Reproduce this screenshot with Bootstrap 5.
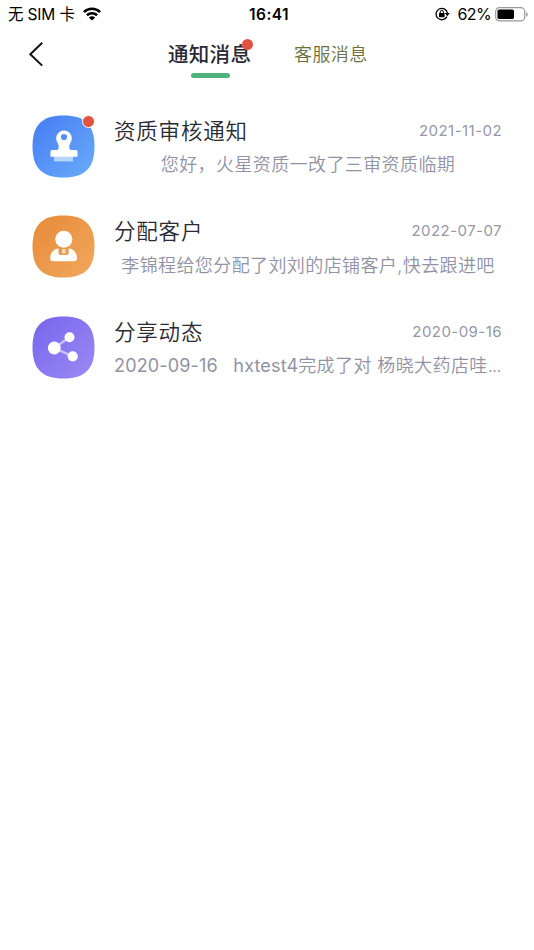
<!DOCTYPE html>
<html lang="zh-CN">
<head>
<meta charset="utf-8">
<meta name="viewport" content="width=device-width, initial-scale=1">
<title>通知消息</title>
<link href="https://cdn.jsdelivr.net/npm/bootstrap@5.3.0/dist/css/bootstrap.min.css" rel="stylesheet">
<style>
body{font-family:Inter,"Noto Sans CJK SC",sans-serif;color:#292a33;min-height:950px;overflow:hidden}
svg{display:block;flex:none}
.status-bar{height:28px;color:#000;font-size:15.5px;line-height:28px;padding:0 6px 0 8px}
.status-side{flex:1 1 0}
.clock{font-weight:600;font-size:15.5px;letter-spacing:.4px;padding:1px 0 0 2px}
.carrier{letter-spacing:-.15px;font-weight:400;padding-top:1px}
.pct{font-size:16px;letter-spacing:-.65px;margin-left:8px}
.top-nav{height:60px;padding-left:28px}
.back-btn{padding:13px 0 0;width:140px}
.tab-main{font-size:20.5px;font-weight:500;line-height:30px;letter-spacing:.3px;padding-top:12px;width:84px}
.tab-main::after{content:"";display:block;width:39px;height:5px;border-radius:3px;background:#4eb27c;margin:2.5px auto 0}
.tab-dot{width:11px;height:11px;background:#e15241;top:11px;right:-.5px}
.tab-side{font-size:18px;font-weight:350;line-height:30px;letter-spacing:.4px;color:#6c7040;padding-top:12px;margin-left:42px}
.messages{padding:26.5px 32px 0}
.message{height:100.6px;gap:19px}
.item-dot{width:13px;height:13px;background:#e15241;border:1px solid #fff;top:0;right:.5px}
.title{font-size:21.5px;line-height:32px;letter-spacing:.8px;font-weight:350}
.date{font-size:15px;letter-spacing:.45px;color:#9797a8;line-height:32px}
.desc{font-size:18px;font-weight:350;letter-spacing:.4px;line-height:28px;color:#9292a5;white-space:pre;margin-top:4.5px}
.latin{letter-spacing:.15px;font-weight:400}
.dots{letter-spacing:-.7px}
.message-body{min-width:0}
</style>
</head>
<body class="bg-white">
<header>
  <div class="status-bar d-flex align-items-center">
    <div class="status-side d-flex align-items-center">
      <span class="carrier">无 SIM 卡</span>
      <svg class="ms-2" width="18" height="14" viewBox="0 0 18 14"><g fill="none" stroke="#000" stroke-width="2.6"><path d="M.9 5.1C5.4.7 12.6.7 17.1 5.1"/><path d="M3.9 8.3c2.9-2.8 7.3-2.8 10.2 0"/></g><path d="M9 13.4 5.8 10.4c1.8-1.7 4.6-1.7 6.4 0z"/></svg>
    </div>
    <div class="clock">16:41</div>
    <div class="status-side d-flex align-items-center justify-content-end">
      <svg width="15" height="14" viewBox="0 0 15 14"><path d="M11.9 9.6A5.7 5.7 0 1 1 12.4 6M10.2 11.4l-.7.6" fill="none" stroke="#000" stroke-width="1.3"/><path d="M9.8 6h5l-2.5 3.3z"/><rect x="4" y="6" width="5.6" height="4.2" rx=".6"/><path d="M5.2 6.2V5a1.6 1.6 0 0 1 3.2 0v1.2" fill="none" stroke="#000" stroke-width="1"/></svg>
      <span class="pct">62%</span>
      <svg class="ms-1" width="33" height="15" viewBox="0 0 33 15"><rect x=".7" y=".7" width="29" height="13.2" rx="3.8" fill="none" stroke="#999" stroke-width="1.2"/><rect x="2.5" y="2.5" width="16.5" height="9.6" rx="1.7"/><path d="M31.2 5v4.8c2-.8 2-4 0-4.8z" fill="#999"/></svg>
    </div>
  </div>
  <nav class="top-nav d-flex align-items-start">
    <a class="back-btn" href="#" aria-label="返回"><svg width="16" height="26" viewBox="0 0 16 26"><path d="M14.2 1.8 2.3 13.2 14.2 24.6" fill="none" stroke="#111" stroke-width="2"/></svg></a>
    <div class="tab-main position-relative text-nowrap">通知消息<span class="tab-dot position-absolute rounded-circle"></span></div>
    <div class="tab-side text-nowrap">客服消息</div>
  </nav>
</header>
<main class="messages">
  <article class="message d-flex align-items-start">
    <div class="position-relative">
      <svg width="63" height="63" viewBox="0 0 63 63"><defs><linearGradient id="blue" x2="1" y2="1"><stop stop-color="#467cf3"/><stop offset="1" stop-color="#69acfa"/></linearGradient></defs><path d="M31.5.5C53 .5 62.5 10 62.5 31.5S53 62.5 31.5 62.5.5 53 .5 31.5 10 .5 31.5.5Z" fill="url(#blue)"/><path d="M22 41h19v5.4H22z" fill="#b5d5fd"/><path fill="#fff" fill-rule="evenodd" d="M32 15.5a7.8 7.8 0 0 1 7 11.3c-1.5 2.8-2 4.5-1.7 6.2.2 1.3 1 2 2.3 2H44a1.5 1.5 0 0 1 1.5 1.5v5.2h-27v-5.2A1.5 1.5 0 0 1 20 35h4.4c1.3 0 2.1-.7 2.3-2 .3-1.7-.2-3.4-1.7-6.2a7.8 7.8 0 0 1 7-11.3Zm0 3.4a3.1 3.1 0 1 0 0 6.2 3.1 3.1 0 0 0 0-6.2Z"/></svg>
      <span class="item-dot position-absolute rounded-circle"></span>
    </div>
    <div class="message-body flex-grow-1">
      <div class="d-flex justify-content-between"><h2 class="title mb-0">资质审核通知</h2><time class="date">2021-11-02</time></div>
      <p class="desc mb-0 text-center">您好，火星资质一改了三审资质临期</p>
    </div>
  </article>
  <article class="message d-flex align-items-start">
    <svg width="63" height="63" viewBox="0 0 63 63"><defs><linearGradient id="orange" x2="1" y2="1"><stop stop-color="#e78a3a"/><stop offset="1" stop-color="#f1a85c"/></linearGradient></defs><path d="M31.5.5C53 .5 62.5 10 62.5 31.5S53 62.5 31.5 62.5.5 53 .5 31.5 10 .5 31.5.5Z" fill="url(#orange)"/><circle cx="31.8" cy="24.3" r="8.5" fill="#fff"/><path fill="#fff" d="M26.5 33.3c-5.2 1.2-8.3 4.8-8.3 9.7 0 2.3 1 3.3 3.2 3.3h20.4c2.2 0 3.2-1 3.2-3.3 0-4.9-3.1-8.5-8.3-9.7v4.8c0 1.2-.8 2-2 2h-6.2c-1.2 0-2-.8-2-2z"/><rect x="30" y="34" width="3.6" height="4.6" rx="1.2" fill="#f9dcbc"/></svg>
    <div class="message-body flex-grow-1">
      <div class="d-flex justify-content-between"><h2 class="title mb-0">分配客户</h2><time class="date">2022-07-07</time></div>
      <p class="desc mb-0 text-center">李锦程给您分配了刘刘的店铺客户,快去跟进吧</p>
    </div>
  </article>
  <article class="message d-flex align-items-start">
    <svg width="63" height="63" viewBox="0 0 63 63"><defs><linearGradient id="purple" x2="1" y2="1"><stop stop-color="#7765ed"/><stop offset="1" stop-color="#9b8af3"/></linearGradient></defs><path d="M31.5.5C53 .5 62.5 10 62.5 31.5S53 62.5 31.5 62.5.5 53 .5 31.5 10 .5 31.5.5Z" fill="url(#purple)"/><path d="M37.5 21.3 22.3 32l18.4 8.3" fill="none" stroke="#c9c1fa" stroke-width="2.4"/><g fill="#fff"><circle cx="37.5" cy="21.3" r="5"/><circle cx="22.3" cy="32" r="6.4"/><circle cx="40.7" cy="40.3" r="5.1"/></g></svg>
    <div class="message-body flex-grow-1">
      <div class="d-flex justify-content-between"><h2 class="title mb-0">分享动态</h2><time class="date">2020-09-16</time></div>
      <p class="desc mb-0"><span class="latin">2020-09-16   hxtest4</span>完成了对 杨晓大药店哇<span class="dots">...</span></p>
    </div>
  </article>
</main>
<script src="https://cdn.jsdelivr.net/npm/bootstrap@5.3.0/dist/js/bootstrap.bundle.min.js"></script>
</body>
</html>
